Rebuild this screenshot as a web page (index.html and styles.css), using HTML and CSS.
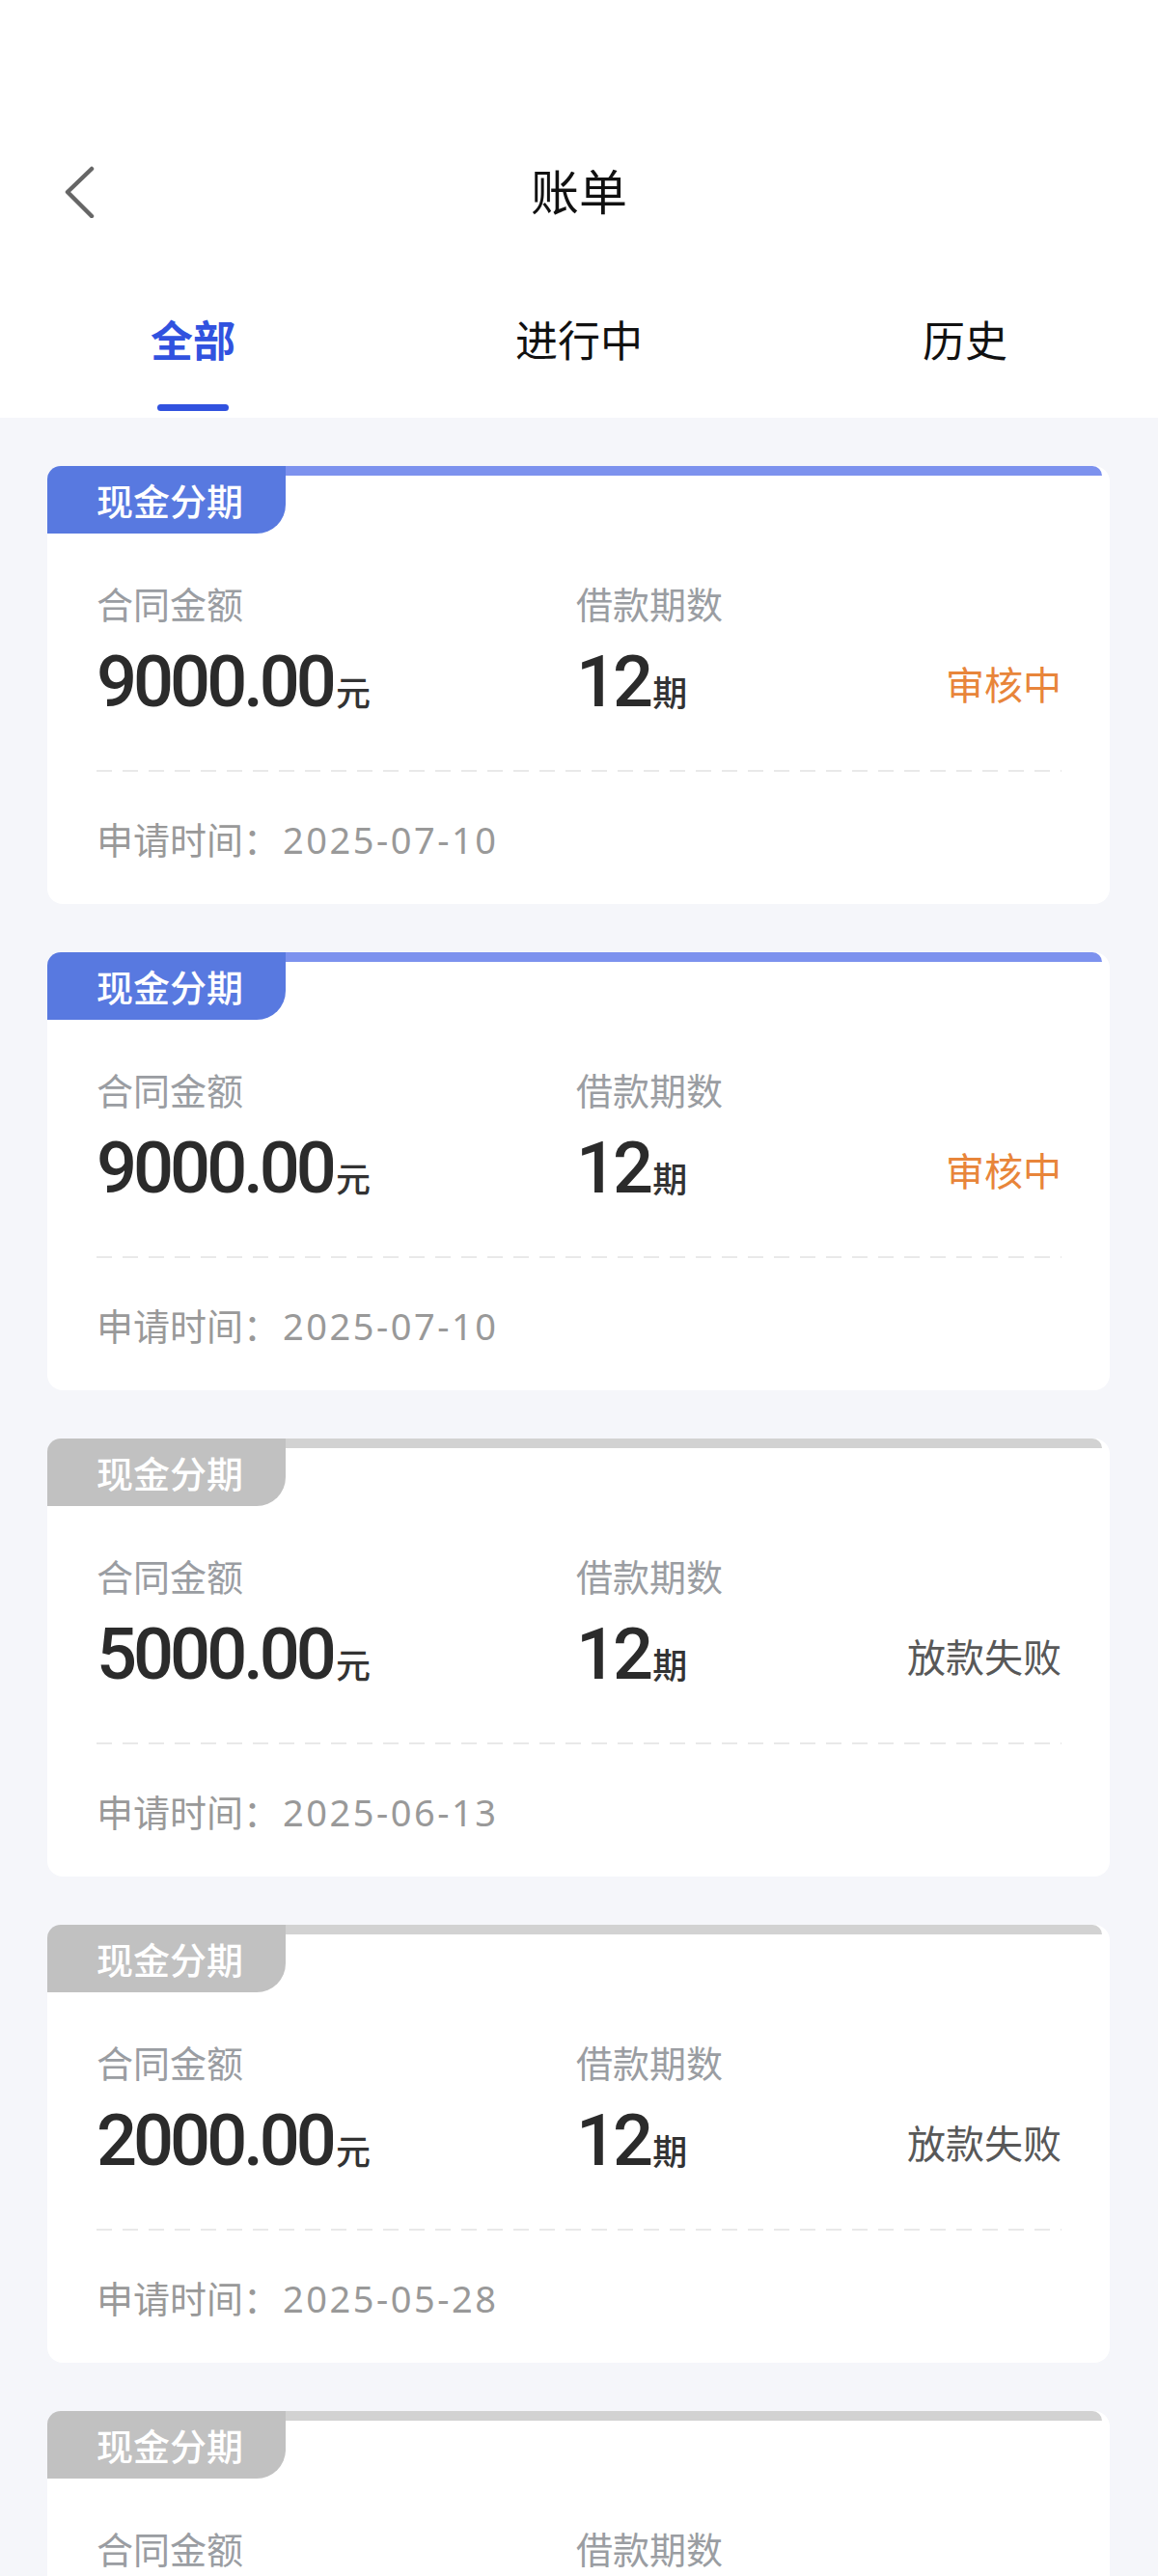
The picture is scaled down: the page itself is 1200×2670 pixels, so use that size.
FILE: index.html
```html
<!DOCTYPE html>
<html lang="zh-CN">
<head>
    <meta charset="UTF-8" />
    <meta name="viewport" content="width=device-width, initial-scale=1" />
    <title>账单</title>
    <link rel="stylesheet" href="styles.css">
</head>
<body>
    <header class="top">
        <div class="nav">
            <div class="nav-back">
                <svg width="40" height="60" viewBox="0 0 40 60">
                    <polyline points="31,9 6,33 31,58" fill="none" stroke="#666" stroke-width="4.5" stroke-linecap="round" stroke-linejoin="round"/>
                </svg>
            </div>
            <h1 class="nav-title">账单</h1>
            <div></div>
        </div>
        <nav class="tabs">
            <div class="tab active"><span>全部</span><i></i></div>
            <div class="tab"><span>进行中</span><i></i></div>
            <div class="tab"><span>历史</span><i></i></div>
        </nav>
    </header>

    <main class="list">
        <div class="card">
            <div class="card-top"><div class="tag">现金分期</div><div class="stripe"></div></div>
            <div class="card-body">
                <div class="grid">
                    <div class="label">合同金额</div>
                    <div class="label">借款期数</div>
                    <div></div>
                    <div class="value">9000.00<small>元</small></div>
                    <div class="value">12<small>期</small></div>
                    <div class="status pending">审核中</div>
                </div>
                <div class="dash"></div>
                <div class="date">申请时间：<span>2025-07-10</span></div>
            </div>
        </div>

        <div class="card">
            <div class="card-top"><div class="tag">现金分期</div><div class="stripe"></div></div>
            <div class="card-body">
                <div class="grid">
                    <div class="label">合同金额</div>
                    <div class="label">借款期数</div>
                    <div></div>
                    <div class="value">9000.00<small>元</small></div>
                    <div class="value">12<small>期</small></div>
                    <div class="status pending">审核中</div>
                </div>
                <div class="dash"></div>
                <div class="date">申请时间：<span>2025-07-10</span></div>
            </div>
        </div>

        <div class="card done">
            <div class="card-top"><div class="tag">现金分期</div><div class="stripe"></div></div>
            <div class="card-body">
                <div class="grid">
                    <div class="label">合同金额</div>
                    <div class="label">借款期数</div>
                    <div></div>
                    <div class="value">5000.00<small>元</small></div>
                    <div class="value">12<small>期</small></div>
                    <div class="status failed">放款失败</div>
                </div>
                <div class="dash"></div>
                <div class="date">申请时间：<span>2025-06-13</span></div>
            </div>
        </div>

        <div class="card done">
            <div class="card-top"><div class="tag">现金分期</div><div class="stripe"></div></div>
            <div class="card-body">
                <div class="grid">
                    <div class="label">合同金额</div>
                    <div class="label">借款期数</div>
                    <div></div>
                    <div class="value">2000.00<small>元</small></div>
                    <div class="value">12<small>期</small></div>
                    <div class="status failed">放款失败</div>
                </div>
                <div class="dash"></div>
                <div class="date">申请时间：<span>2025-05-28</span></div>
            </div>
        </div>

        <div class="card done">
            <div class="card-top"><div class="tag">现金分期</div><div class="stripe"></div></div>
            <div class="card-body">
                <div class="grid">
                    <div class="label">合同金额</div>
                    <div class="label">借款期数</div>
                    <div></div>
                    <div class="value">3000.00<small>元</small></div>
                    <div class="value">12<small>期</small></div>
                    <div class="status failed">放款失败</div>
                </div>
                <div class="dash"></div>
                <div class="date">申请时间：<span>2025-05-10</span></div>
            </div>
        </div>
    </main>
</body>
</html>
```

FILE: styles.css
```css
body {
    margin: 0;
    background: #f5f6fa;
    font-family: "Noto Sans CJK SC", "Noto Sans", sans-serif;
    color: #111;
}
.top {
    background: #fff;
}
.nav {
    display: grid;
    grid-template-columns: 1fr auto 1fr;
    align-items: center;
    height: 111px;
    padding-top: 140px;
}
.nav-back {
    padding-left: 64px;
    display: flex;
    align-items: center;
}
.nav-title {
    margin: 0;
    font-size: 50px;
    font-weight: 400;
    line-height: 60px;
    color: #111;
}
.tabs {
    display: grid;
    grid-template-columns: repeat(3, 1fr);
    height: 182px;
}
.tab {
    display: flex;
    flex-direction: column;
    align-items: center;
    padding-top: 75px;
}
.tab span {
    font-size: 44px;
    line-height: 50px;
    color: #111;
}
.tab i {
    display: block;
    width: 74px;
    height: 7px;
    margin-top: 43px;
    border-radius: 4px;
}
.tab.active span {
    color: #3152df;
    font-weight: 700;
}
.tab.active i {
    background: #3152df;
}
.list {
    padding: 50px 50px 0 49px;
}
.card {
    background: #fff;
    border-radius: 16px;
    margin-bottom: 50px;
}
.card-top {
    display: flex;
    align-items: flex-start;
}
.tag {
    width: 247px;
    height: 70px;
    box-sizing: border-box;
    padding-left: 51px;
    line-height: 70px;
    font-size: 38px;
    font-weight: 500;
    color: #fff;
    background: #5879e0;
    border-radius: 14px 0 30px 0;
}
.stripe {
    flex: 1;
    height: 10px;
    margin-right: 8px;
    background: #7d92ee;
    border-top-right-radius: 10px;
}
.card.done .tag {
    background: #c1c1c1;
}
.card.done .stripe {
    background: #d2d2d2;
}
.card-body {
    padding: 50px 50px 45px 51px;
}
.grid {
    display: grid;
    grid-template-columns: 497px 1fr auto;
    row-gap: 20px;
    align-items: center;
}
.label {
    font-size: 38px;
    line-height: 44px;
    color: #9a9da2;
}
.value {
    font-family: Roboto, "Noto Sans CJK SC", sans-serif;
    font-size: 74px;
    font-weight: 500;
    letter-spacing: -4px;
    line-height: 80px;
    color: #2b2b2b;
}
.value small {
    font-family: "Noto Sans CJK SC", sans-serif;
    font-size: 36px;
    font-weight: 500;
    letter-spacing: 0;
    margin-left: 3px;
    color: #333;
}
.status {
    font-size: 40px;
    line-height: 50px;
    padding-bottom: 8px;
}
.status.pending {
    color: #e8853a;
}
.status.failed {
    color: #585858;
}
.dash {
    height: 2px;
    margin-top: 42px;
    background: repeating-linear-gradient(90deg, #e9e9e9 0 16px, transparent 16px 27px);
}
.date {
    margin-top: 47px;
    font-size: 38px;
    line-height: 44px;
    color: #999;
}
.date span {
    font-family: "Noto Sans", sans-serif;
    letter-spacing: 2.5px;
    margin-left: 3px;
}
```
